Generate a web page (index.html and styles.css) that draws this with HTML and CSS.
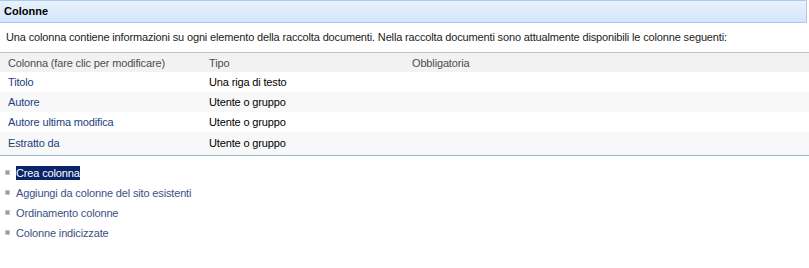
FILE: index.html
```html
<!DOCTYPE html>
<html lang="it">
<head>
    <meta charset="UTF-8">
    <title>Colonne</title>
    <link rel="stylesheet" href="styles.css">
</head>
<body>
    <div class="section-title">Colonne</div>
    <p class="section-desc">Una colonna contiene informazioni su ogni elemento della raccolta documenti. Nella raccolta documenti sono attualmente disponibili le colonne seguenti:</p>

    <div class="table-wrap">
        <table class="col-table">
            <thead>
                <tr>
                    <th class="c1">Colonna (fare clic per modificare)</th>
                    <th class="c2">Tipo</th>
                    <th>Obbligatoria</th>
                </tr>
            </thead>
            <tbody>
                <tr>
                    <td><a href="#">Titolo</a></td>
                    <td>Una riga di testo</td>
                    <td></td>
                </tr>
                <tr class="alt">
                    <td><a href="#">Autore</a></td>
                    <td>Utente o gruppo</td>
                    <td></td>
                </tr>
                <tr>
                    <td><a href="#">Autore ultima modifica</a></td>
                    <td>Utente o gruppo</td>
                    <td></td>
                </tr>
                <tr class="alt last">
                    <td><a href="#">Estratto da</a></td>
                    <td>Utente o gruppo</td>
                    <td></td>
                </tr>
            </tbody>
        </table>
    </div>

    <ul class="actions">
        <li><a href="#" class="selected">Crea colonna </a></li>
        <li><a href="#">Aggiungi da colonne del sito esistenti</a></li>
        <li><a href="#">Ordinamento colonne</a></li>
        <li><a href="#">Colonne indicizzate</a></li>
    </ul>
</body>
</html>
```

FILE: styles.css
```css
body {
    font-family: "Liberation Sans", Arial, sans-serif;
    font-size: 11px;
    letter-spacing: -0.15px;
    margin: 0;
    background-color: #ffffff;
    color: #000000;
}
a,
a:visited {
    text-decoration: none;
}
.section-title {
    width: 802px;
    height: 21px;
    line-height: 21px;
    padding-left: 4px;
    font-weight: bold;
    font-size: 11px;
    letter-spacing: 0;
    background: linear-gradient(#e9f1fc, #d4e5fb);
    border: 1px solid #a9cbf0;
    border-left: none;
}
.section-desc {
    margin: 0;
    padding: 0 6px;
    height: 29px;
    line-height: 29px;
    white-space: nowrap;
    color: #222;
}
.table-wrap {
    border-top: 1px solid #c2c2c2;
    border-bottom: 1px solid #9fb7c8;
    padding-bottom: 1px;
    background-color: #eef6f8;
}
.col-table {
    width: 809px;
    border-collapse: collapse;
}
.col-table th {
    background-color: #f2f2f2;
    font-weight: normal;
    color: #4d4d4d;
    text-align: left;
    height: 19px;
    padding: 0 0 0 8px;
}
.col-table th.c1 {
    width: 193px;
}
.col-table th.c2 {
    width: 195px;
}
.col-table td {
    height: 20px;
    padding: 0 0 0 8px;
    color: #000;
    background-color: #ffffff;
}
.col-table tr.alt td {
    background-color: #f8f8f8;
}
.col-table tr.last td {
    height: 21px;
    padding-bottom: 1px;
}
.col-table td a,
.col-table td a:visited {
    color: #1d3f7e;
}
.actions {
    list-style: none;
    margin: 7px 0 0;
    padding: 0 0 0 5px;
}
.actions li {
    height: 20px;
    line-height: 20px;
    display: flex;
    align-items: center;
}
.actions li::before {
    content: "";
    width: 5px;
    height: 5px;
    background-color: #9a9a9a;
    border: 1px solid #c8c8c8;
    margin-right: 6px;
    margin-top: -2px;
    box-sizing: border-box;
}
.actions a,
.actions a:visited {
    color: #3b5083;
    line-height: 14px;
}
.actions a.selected {
    background-color: #0a246a;
    color: #ffffff;
}
```
